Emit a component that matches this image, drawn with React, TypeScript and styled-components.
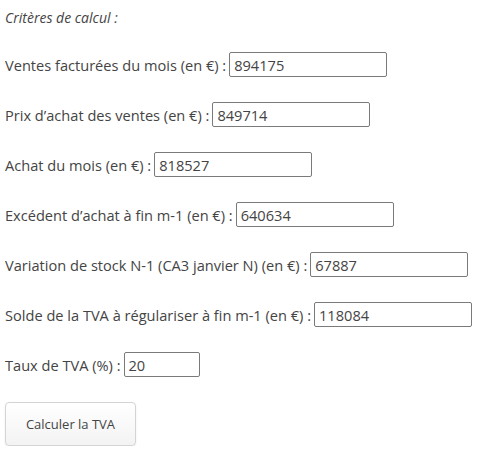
import React from "react";
import styled, { createGlobalStyle } from "styled-components";

const GlobalStyle = createGlobalStyle`
	body {
		margin: 0;
		background: #fff;
		font-family: "Open Sans", "DejaVu Sans", sans-serif;
		color: #444;
	}
`;

const Form = styled.form`
	display: flex;
	flex-direction: column;
	align-items: flex-start;
	gap: 25px;
	padding: 5px 5px 0 5px;
`;

const Title = styled.p`
	margin: 0 0 -3px 0;
	height: 25px;
	line-height: 25px;
	font-style: italic;
	font-size: 14px;
`;

const Row = styled.label`
	display: flex;
	align-items: center;
	height: 25px;
	font-size: 14.6px;
	white-space: nowrap;
`;

const Field = styled.input<{ $width?: number }>`
	box-sizing: border-box;
	width: ${({ $width }) => $width ?? 158}px;
	height: 25px;
	margin-left: 3px;
	padding: 0 4px;
	border: 1px solid #7a7a7a;
	border-radius: 2px;
	font-family: inherit;
	font-size: 14.6px;
	color: #444;
	outline: none;
`;

const Button = styled.button`
	width: 131px;
	height: 44px;
	border: 1px solid #d4d4d4;
	border-radius: 4px;
	background: linear-gradient(#ffffff, #f3f3f3);
	box-shadow: 0 1px 2px rgba(0, 0, 0, 0.08);
	font-family: inherit;
	font-size: 13px;
	color: #444;
	cursor: pointer;
`;

const fields: { label: string; value: string; width?: number }[] = [
	{ label: "Ventes facturées du mois (en €) :", value: "894175" },
	{ label: "Prix d’achat des ventes (en €) :", value: "849714" },
	{ label: "Achat du mois (en €) :", value: "818527" },
	{ label: "Excédent d’achat à fin m-1 (en €) :", value: "640634" },
	{ label: "Variation de stock N-1 (CA3 janvier N) (en €) :", value: "67887" },
	{ label: "Solde de la TVA à régulariser à fin m-1 (en €) :", value: "118084" },
	{ label: "Taux de TVA (%) :", value: "20", width: 76 },
];

export default function App() {
	return (
		<>
			<GlobalStyle />
			<Form onSubmit={(e) => e.preventDefault()}>
				<Title>Critères de calcul :</Title>
				{fields.map((f) => (
					<Row key={f.label}>
						{f.label}
						<Field $width={f.width} defaultValue={f.value} />
					</Row>
				))}
				<Button type="submit">Calculer la TVA</Button>
			</Form>
		</>
	);
}
